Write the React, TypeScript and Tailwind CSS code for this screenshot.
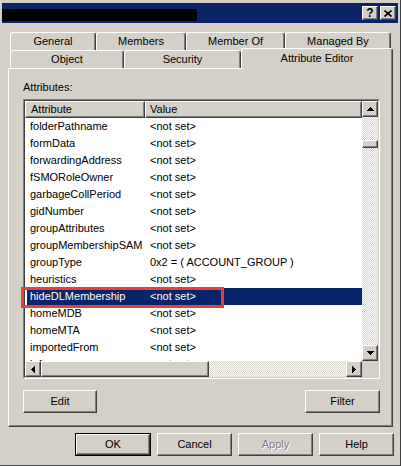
import React from 'react';

// classic Win2000 bevels
const raised =
  'border border-t-white border-l-white border-r-[#404040] border-b-[#404040] shadow-[inset_-1px_-1px_0_#808080] bg-[#d4d0c8]';
const checker =
  'bg-[image:repeating-conic-gradient(#ffffff_0_25%,#d4d0c8_0_50%)] bg-[length:2px_2px]';

const rows: [string, string][] = [
  ['folderPathname', '<not set>'],
  ['formData', '<not set>'],
  ['forwardingAddress', '<not set>'],
  ['fSMORoleOwner', '<not set>'],
  ['garbageCollPeriod', '<not set>'],
  ['gidNumber', '<not set>'],
  ['groupAttributes', '<not set>'],
  ['groupMembershipSAM', '<not set>'],
  ['groupType', '0x2 = ( ACCOUNT_GROUP )'],
  ['heuristics', '<not set>'],
  ['hideDLMembership', '<not set>'],
  ['homeMDB', '<not set>'],
  ['homeMTA', '<not set>'],
  ['importedFrom', '<not set>'],
  ['info', '<not set>'],
];

const Arrow = ({ dir }: { dir: 'up' | 'down' | 'left' | 'right' }) => {
  const d = {
    up: 'M3 0h1v1h1v1h1v1h1v1H0V3h1V2h1V1h1z',
    down: 'M0 0h7v1h-1v1h-1v1h-1v1h-1v-1h-1v-1h-1v-1h-1z',
    left: 'M3 0h1v7h-1v-1h-1v-1h-1v-1h-1v-1h1v-1h1v-1h1z',
    right: 'M0 0h1v1h1v1h1v1h1v1h-1v1h-1v1h-1v1h-1z',
  }[dir];
  const vertical = dir === 'up' || dir === 'down';
  return (
    <svg width={vertical ? 7 : 4} height={vertical ? 4 : 7} shapeRendering="crispEdges">
      <path d={d} fill="#000" />
    </svg>
  );
};

const Tab = ({ label, w }: { label: string; w: string }) => (
  <div
    className={`${w} h-[18px] flex items-center justify-center border-t border-l border-r border-t-white border-l-white border-r-[#404040] shadow-[inset_-1px_0_0_#808080] rounded-t-[3px]`}
  >
    {label}
  </div>
);

const Button = ({ label, w, disabled }: { label: string; w: string; disabled?: boolean }) => (
  <div
    className={`${w} h-[23px] flex items-center justify-center ${raised} ${
      disabled ? 'text-[#808080] [text-shadow:1px_1px_0_#ffffff]' : ''
    }`}
  >
    {label}
  </div>
);

export default function App() {
  return (
    <div
      className="relative w-[401px] h-[466px] overflow-hidden bg-[#d4d0c8] pt-[3px] border-r border-b border-r-[#404040] border-b-[#404040] text-[11px] leading-[13px] text-black"
      style={{ fontFamily: '"Liberation Sans", Arial, sans-serif' }}
    >
      {/* Title bar */}
      <div className="ml-[2px] w-[396px] h-[20px] bg-[#0a246a] flex items-start">
        <div className="mt-[6px] w-[195px] h-[12px] bg-black" />
        <div className="ml-auto mt-[3px] mr-[2px] flex gap-[2px]">
          <div className={`w-[16px] h-[14px] flex items-center justify-center font-bold text-[12px] ${raised}`}>?</div>
          <div className={`w-[16px] h-[14px] flex items-center justify-center ${raised}`}>
            <svg width="8" height="7" viewBox="0 0 8 7">
              <path d="M0.5 0.5L7.5 6.5M7.5 0.5L0.5 6.5" stroke="#000" strokeWidth="1.7" />
            </svg>
          </div>
        </div>
      </div>

      {/* Tabs */}
      <div className="mt-[9px] ml-[8px]">
        <div className="flex ml-[2px]">
          <Tab label="General" w="w-[86px]" />
          <Tab label="Members" w="w-[90px]" />
          <Tab label="Member Of" w="w-[99px]" />
          <Tab label="Managed By" w="w-[106px]" />
        </div>
        <div className="flex items-end h-[18px] ml-[2px]">
          <Tab label="Object" w="w-[114px]" />
          <Tab label="Security" w="w-[117px]" />
          <div className="relative z-10 w-[152px] h-[21px] -mb-[1px] pt-[3px] flex justify-center bg-[#d4d0c8] border-t border-l border-r border-t-white border-l-white border-r-[#404040] shadow-[inset_-1px_0_0_#808080] rounded-t-[3px]">
            Attribute Editor
          </div>
        </div>
      </div>

      {/* Panel */}
      <div className="ml-[8px] w-[385px] h-[359px] pl-[14px] border border-t-white border-l-white border-r-[#404040] border-b-[#404040] shadow-[inset_-1px_-1px_0_#808080]">
        <div className="pt-[12px]">Attributes:</div>

        {/* List view */}
        <div className="mt-[5px] w-[357px] h-[280px] border border-t-[#808080] border-l-[#808080] border-r-white border-b-white">
          <div className="w-full h-full border border-t-[#404040] border-l-[#404040] border-r-[#d4d0c8] border-b-[#d4d0c8] bg-white flex flex-col">
            <div className="flex h-[260px]">
              <div className="w-[337px] flex flex-col">
                <div className="flex h-[17px]">
                  <div className={`w-[120px] pl-[5px] flex items-center ${raised}`}>Attribute</div>
                  <div className={`flex-1 pl-[4px] flex items-center ${raised}`}>Value</div>
                </div>
                <div className="h-[243px] overflow-hidden">
                  {rows.map(([name, value]) => {
                    const selected = name === 'hideDLMembership';
                    return (
                      <div
                        key={name}
                        className={`h-[17px] ml-[2px] flex items-center whitespace-nowrap ${
                          selected ? 'bg-[#0a246a] text-white' : ''
                        }`}
                      >
                        <div className="w-[118px] pl-[3px]">{name}</div>
                        <div className="pl-[5px]">{value}</div>
                      </div>
                    );
                  })}
                </div>
              </div>

              {/* vertical scrollbar */}
              <div className="w-[16px] flex flex-col">
                <div className={`h-[16px] flex items-center justify-center ${raised}`}>
                  <Arrow dir="up" />
                </div>
                <div className={`flex-1 flex flex-col ${checker}`}>
                  <div className="h-[23px]" />
                  <div className={`h-[8px] ${raised}`} />
                </div>
                <div className={`h-[16px] flex items-center justify-center ${raised}`}>
                  <Arrow dir="down" />
                </div>
              </div>
            </div>

            {/* horizontal scrollbar */}
            <div className="flex h-[16px]">
              <div className={`w-[16px] flex items-center justify-center ${raised}`}>
                <Arrow dir="left" />
              </div>
              <div className={`w-[168px] ${raised}`} />
              <div className={`flex-1 ${checker}`} />
              <div className={`w-[16px] flex items-center justify-center ${raised}`}>
                <Arrow dir="right" />
              </div>
              <div className="w-[16px] bg-[#d4d0c8]" />
            </div>
          </div>
        </div>

        <div className="mt-[11px] w-[357px] flex justify-between">
          <Button label="Edit" w="w-[74px]" />
          <Button label="Filter" w="w-[75px]" />
        </div>
      </div>

      {/* Dialog buttons */}
      <div className="mt-[6px] w-[394px] flex justify-end gap-[6px]">
        <div className="w-[76px] h-[23px] border border-black">
          <div className={`w-full h-full flex items-center justify-center ${raised}`}>OK</div>
        </div>
        <Button label="Cancel" w="w-[75px]" />
        <Button label="Apply" w="w-[75px]" disabled />
        <Button label="Help" w="w-[75px]" />
      </div>

      {/* red annotation box */}
      <div className="absolute left-[21px] top-[287px] w-[203px] h-[21px] border-[3px] border-[#e5403f]" />
    </div>
  );
}
